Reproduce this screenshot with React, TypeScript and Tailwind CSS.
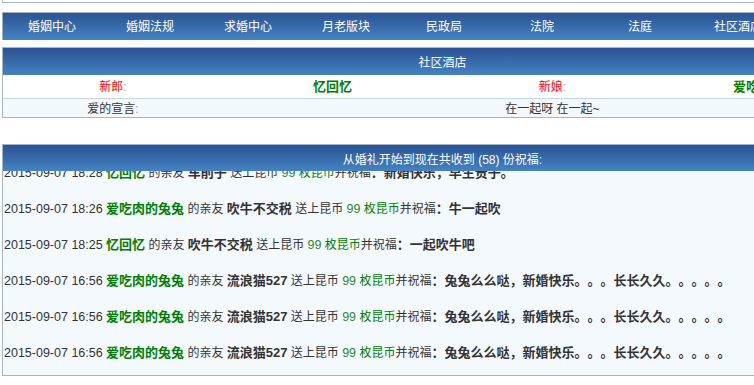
import React from 'react';

const FONT = { fontFamily: '"Liberation Sans", "Noto Sans CJK SC", sans-serif' };

const NAV = ['婚姻中心', '婚姻法规', '求婚中心', '月老版块', '民政局', '法院', '法庭', '社区酒店'];

type Blessing = { time: string; host: string; friend: string; coins: number; words: string };

const BLESSINGS: Blessing[] = [
  { time: '2015-09-07 18:28', host: '忆回忆', friend: '车削子', coins: 99, words: '新婚快乐，早生贵子。' },
  { time: '2015-09-07 18:26', host: '爱吃肉的兔兔', friend: '吹牛不交税', coins: 99, words: '牛一起吹' },
  { time: '2015-09-07 18:25', host: '忆回忆', friend: '吹牛不交税', coins: 99, words: '一起吹牛吧' },
  { time: '2015-09-07 16:56', host: '爱吃肉的兔兔', friend: '流浪猫527', coins: 99, words: '兔兔么么哒，新婚快乐。。。长长久久。。。。。' },
  { time: '2015-09-07 16:56', host: '爱吃肉的兔兔', friend: '流浪猫527', coins: 99, words: '兔兔么么哒，新婚快乐。。。长长久久。。。。。' },
  { time: '2015-09-07 16:56', host: '爱吃肉的兔兔', friend: '流浪猫527', coins: 99, words: '兔兔么么哒，新婚快乐。。。长长久久。。。。。' },
];

const BlueBar: React.FC<{ children?: React.ReactNode; className?: string }> = ({ children, className = '' }) => (
  <div className={`bg-gradient-to-b from-[#2a5394] to-[#4583c2] text-white text-[12px] ${className}`}>
    {children}
  </div>
);

const App: React.FC = () => {
  return (
    <div
      className="w-[754px] h-[385px] overflow-hidden bg-white text-[#333] text-[12px] [text-spacing-trim:space-all]"
      style={FONT}
    >
      <div className="w-[882px] pl-[2px]">
        {/* tail of the box above */}
        <div className="h-[3px] border-l border-b border-[#a3b5c9]" />

        {/* Nav */}
        <BlueBar className="mt-[9px] h-[28px] border-t border-l border-[#9fb2c7] flex">
          {NAV.map(n => (
            <div key={n} className="w-[98px] shrink-0 text-center leading-[28px]">{n}</div>
          ))}
        </BlueBar>

        {/* Couple */}
        <div className="mt-[7px] border-l border-t border-b border-[#a3b5c9]">
          <BlueBar className="h-[27px] text-center leading-[31px]">社区酒店</BlueBar>
          <div className="flex h-[24px] items-center border-b border-[#c6d7ea] bg-white">
            <div className="w-[220px] text-center"><span className="text-[#ff0000]">新郎</span><span className="text-[#999]">:</span></div>
            <div className="w-[220px] text-center font-bold text-[13px] text-[#008000]">忆回忆</div>
            <div className="w-[220px] text-center"><span className="text-[#ff0000]">新娘</span><span className="text-[#999]">:</span></div>
            <div className="w-[220px] text-center font-bold text-[13px] text-[#008000]">爱吃肉的兔兔</div>
          </div>
          <div className="flex h-[18px] items-end bg-[#f3f8fd] leading-[16px]">
            <div className="w-[220px] text-center">爱的宣言<span className="text-[#999]">:</span></div>
            <div className="w-[660px] text-center">在一起呀 在一起~</div>
          </div>
        </div>

        {/* Blessings */}
        <div className="mt-[26px] border-l border-t border-b border-[#a3b5c9]">
          <BlueBar className="h-[26px] text-center leading-[30px]">从婚礼开始到现在共收到 (58) 份祝福:</BlueBar>
          <div className="h-[204px] overflow-hidden bg-[#f4f9fe]">
            <div className="-mt-[16px] pl-[1px]">
              {BLESSINGS.map((b, i) => (
                <div key={i} className="h-[36px] leading-[36px] whitespace-nowrap">
                  <span className="text-[12.5px]">{b.time}</span>{' '}
                  <span className="font-bold text-[13px] text-[#008000]">{b.host}</span>{' '}
                  的亲友{' '}
                  <span className="font-bold text-[13px]">{b.friend}</span>{' '}
                  送上昆币{' '}
                  <span className="text-[12.5px] text-[#2f8a2f]">{b.coins}</span>{' '}
                  <span className="text-[#008000]">枚昆币</span>并祝福
                  <span className="font-bold text-[13px]">：{b.words}</span>
                </div>
              ))}
            </div>
          </div>
        </div>
      </div>
    </div>
  );
};

export default App;
